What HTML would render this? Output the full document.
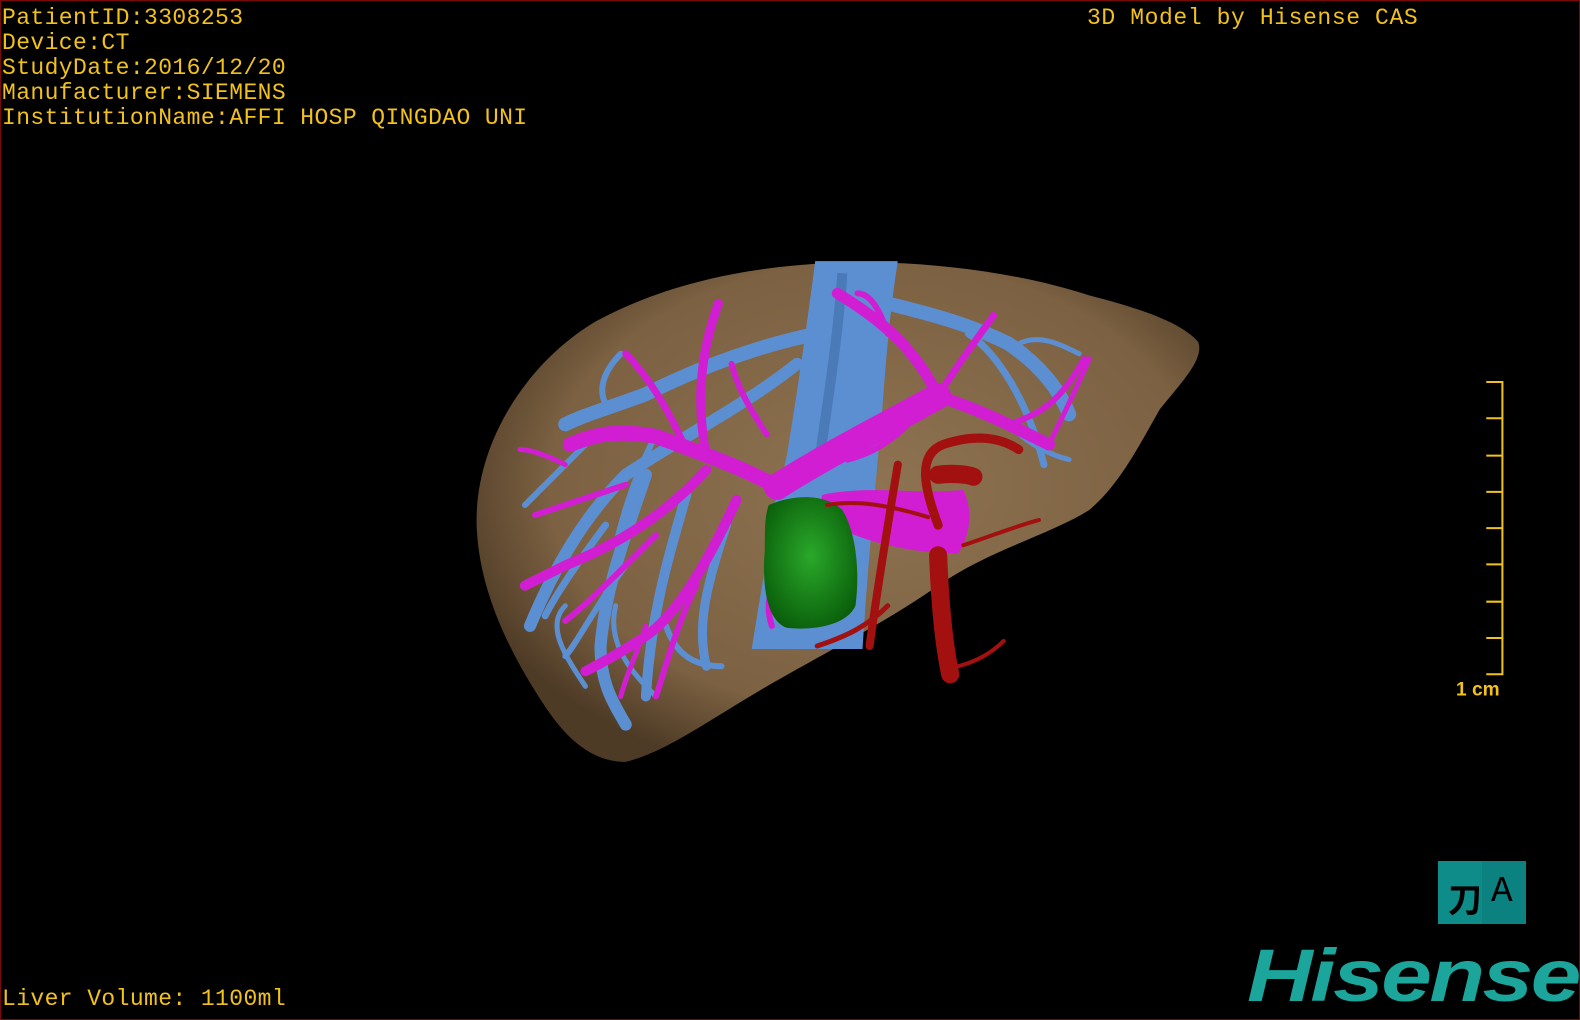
<!DOCTYPE html>
<html><head><meta charset="utf-8"><style>
html,body{margin:0;padding:0;background:#000;}
#c{position:relative;width:1580px;height:1020px;background:#000;overflow:hidden;box-sizing:border-box;border:1px solid #7a0a0a;}
.t{position:absolute;font-family:"Liberation Mono",monospace;font-size:23px;color:#f2c21c;line-height:25px;white-space:pre;letter-spacing:0.4px;}
svg{position:absolute;left:0;top:0;}
</style></head><body><div id="c">
<svg width="1580" height="1020" viewBox="0 0 1568 1012">
<defs>
<radialGradient id="lv" cx="0.55" cy="0.45" r="0.6">
<stop offset="0" stop-color="#8e7352"/><stop offset="0.75" stop-color="#7c6142"/><stop offset="1" stop-color="#4e3b26"/>
</radialGradient>
<radialGradient id="gr" cx="0.5" cy="0.45" r="0.6"><stop offset="0" stop-color="#2aa82a"/><stop offset="1" stop-color="#0a5e0a"/></radialGradient>
</defs>
<path d="M472,520 C470,440 520,360 590,318 C660,280 740,264 820,260 C900,256 1000,266 1080,292 C1130,305 1170,318 1188,338 C1195,355 1170,380 1150,405 C1130,440 1110,480 1080,505 C1040,530 980,545 930,580 C880,615 830,640 760,680 C700,715 660,745 620,755 C585,755 560,730 540,700 C500,640 474,580 472,520 Z" fill="url(#lv)"/>
<g fill="none" stroke="#5c8fd2" stroke-linecap="round">
<path d="M810,330 C760,340 700,360 640,390 C600,405 580,410 560,420" stroke-width="14"/>
<path d="M790,360 C740,400 680,430 620,470 C580,510 550,560 525,620" stroke-width="12"/>
<path d="M880,300 C920,310 960,320 1000,340 C1030,360 1050,385 1060,410" stroke-width="14"/>
<path d="M960,330 C990,350 1020,400 1035,460" stroke-width="7"/>
<path d="M640,470 C620,530 600,580 595,640 C595,680 610,700 620,718" stroke-width="12"/>
<path d="M680,490 C660,560 645,610 640,690" stroke-width="10"/>
<path d="M720,520 C700,580 690,620 700,660" stroke-width="9"/>
<path d="M600,520 C570,560 550,590 540,610" stroke-width="7"/>
<path d="M620,560 C590,600 570,640 560,650" stroke-width="6"/>
<path d="M580,440 C560,460 540,480 520,500" stroke-width="6"/>
<path d="M600,400 C590,380 605,360 615,350" stroke-width="6"/>
<path d="M650,430 C630,470 620,500 610,540" stroke-width="6"/>
<path d="M830,380 C820,420 800,460 770,500" stroke-width="7"/>
<path d="M660,620 C670,650 690,660 715,660" stroke-width="6"/>
<path d="M1000,420 C1020,440 1040,450 1060,455" stroke-width="5"/>
<path d="M560,600 C540,620 560,650 580,680" stroke-width="5"/>
<path d="M610,600 C600,640 630,670 650,690" stroke-width="5"/>
<path d="M1010,340 C1030,330 1050,340 1070,350" stroke-width="5"/>
</g>
<path d="M808,258 L890,258 C885,290 880,330 875,400 C868,480 860,560 855,643 L745,643 C755,580 765,520 780,450 C790,390 800,320 808,258 Z" fill="#5c8fd2"/>
<path d="M835,270 C830,340 820,400 810,470" stroke="#4a7bb8" stroke-width="10" fill="none"/>
<g fill="none" stroke="#d21ed2" stroke-linecap="round">
<path d="M770,482 C820,450 880,420 930,392" stroke-width="26"/>
<path d="M930,392 C970,405 1000,420 1040,440" stroke-width="12"/>
<path d="M1000,420 C1030,410 1050,400 1075,355" stroke-width="6"/>
<path d="M930,392 C910,350 880,320 830,290" stroke-width="11"/>
<path d="M930,392 C950,360 965,340 985,312" stroke-width="7"/>
<path d="M880,330 C870,300 860,290 850,290" stroke-width="6"/>
<path d="M770,482 C740,465 700,450 650,432 C610,425 590,430 565,440" stroke-width="15"/>
<path d="M700,452 C692,410 690,360 712,300" stroke-width="9"/>
<path d="M680,445 C660,400 640,370 620,350" stroke-width="7"/>
<path d="M700,465 C660,510 610,540 560,560 C540,570 530,575 520,580" stroke-width="10"/>
<path d="M730,495 C700,560 670,610 640,630 C610,650 590,660 580,665" stroke-width="10"/>
<path d="M650,530 C610,570 580,600 560,615" stroke-width="6"/>
<path d="M690,580 C670,620 660,660 650,690" stroke-width="6"/>
<path d="M620,480 C590,490 560,500 530,510" stroke-width="6"/>
<path d="M760,430 C740,400 730,380 725,360" stroke-width="6"/>
<path d="M790,560 C770,570 755,590 765,620" stroke-width="6"/>
<path d="M1040,440 C1050,420 1060,400 1080,355" stroke-width="5"/>
<path d="M900,420 C880,440 860,450 840,455" stroke-width="6"/>
<path d="M640,620 C630,650 620,670 615,690" stroke-width="5"/>
<path d="M560,460 C540,450 525,445 515,445" stroke-width="5"/>
</g>
<path d="M815,490 C860,480 910,490 955,485 C965,505 962,530 950,548 C910,548 870,540 835,525 C820,515 812,500 815,490 Z" fill="#d21ed2"/>
<path d="M762,500 C790,488 820,490 835,505 C850,530 852,570 848,600 C840,618 810,625 780,622 C760,615 755,580 758,545 C758,525 758,510 762,500 Z" fill="url(#gr)"/>
<g fill="none" stroke="#a31010" stroke-linecap="round">
<path d="M930,550 C932,600 936,640 942,668" stroke-width="18"/>
<path d="M930,520 C915,480 910,450 935,440 C965,430 990,432 1010,445" stroke-width="9"/>
<path d="M890,460 C880,520 870,580 862,640" stroke-width="8"/>
<path d="M930,470 C945,468 960,470 965,472" stroke-width="18"/>
<path d="M955,540 C985,530 1010,520 1030,515" stroke-width="4"/>
<path d="M880,600 C860,620 840,630 810,640" stroke-width="5"/>
<path d="M950,660 C970,655 985,645 995,635" stroke-width="4"/>
<path d="M820,500 C850,495 880,500 920,512" stroke-width="4"/>
</g>
<g fill="none" stroke="#f2c21c" stroke-width="2">
<path d="M1474,378 H1490 V668 H1474"/>
<path d="M1474,414 H1490 M1474,451 H1490 M1474,487 H1490 M1474,523 H1490 M1474,559 H1490 M1474,596 H1490 M1474,632 H1490"/>
</g>
<text x="1444" y="689" fill="#f2c21c" font-family="Liberation Sans, sans-serif" font-size="19" font-weight="bold">1 cm</text>
</svg>
<div class="t" style="left:1px;top:5px;">PatientID:3308253
Device:CT
StudyDate:2016/12/20
Manufacturer:SIEMENS
InstitutionName:AFFI HOSP QINGDAO UNI</div>
<div class="t" style="left:1086px;top:5px;letter-spacing:0.6px;">3D Model by Hisense CAS</div>
<div class="t" style="left:1px;top:986px;">Liver Volume: 1100ml</div>
<div style="position:absolute;left:1437px;top:860px;width:88px;height:63px;background:#0e8c8a;">
<div style="position:absolute;left:44px;top:0;width:44px;height:63px;background:#0c8280;"></div>
<div style="position:absolute;left:10px;top:12px;font:bold 34px 'Liberation Mono','Noto Sans CJK SC',monospace;color:#000;">刀</div>
<div style="position:absolute;left:53px;top:10px;font:36px 'Liberation Mono',monospace;color:#000;">A</div>
</div>
<div style="position:absolute;left:1246px;top:932px;font:italic bold 74px 'Liberation Sans',sans-serif;color:#1ca59b;transform:scaleX(1.23);transform-origin:left top;letter-spacing:-2px;">Hisense</div>
</div></body></html>
